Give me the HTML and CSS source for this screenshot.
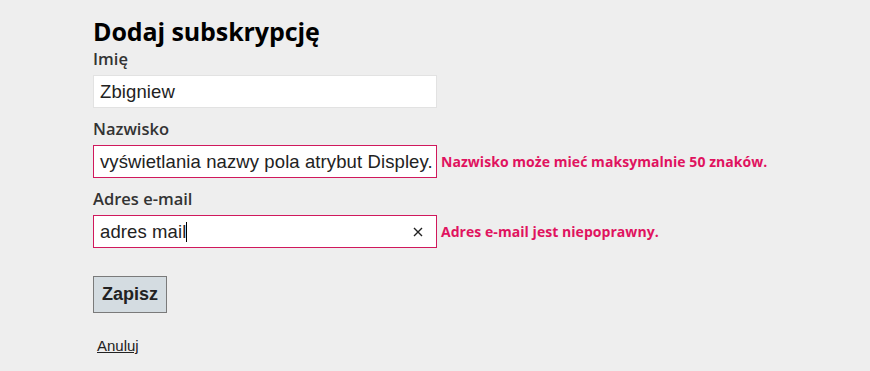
FILE: index.html
```html
<!DOCTYPE html>
<html lang="pl">
<head>
<meta charset="utf-8">
<title>Dodaj subskrypcję</title>
<link rel="stylesheet" href="styles.css">
</head>
<body>
<main class="page">
  <h1 class="title">Dodaj subskrypcję</h1>
  <form class="form">
    <div class="group">
      <label class="label">Imię</label>
      <div class="row">
        <div class="field">Zbigniew</div>
      </div>
    </div>
    <div class="group">
      <label class="label">Nazwisko</label>
      <div class="row">
        <div class="field invalid">vyświetlania nazwy pola atrybut Displey.</div>
        <span class="error">Nazwisko może mieć maksymalnie 50 znaków.</span>
      </div>
    </div>
    <div class="group">
      <label class="label">Adres e-mail</label>
      <div class="row">
        <div class="field invalid with-clear"><span class="value">adres mail</span><span class="caret"></span>
          <svg class="clear" width="10" height="10" viewBox="0 0 10 10"><path d="M1 1 L9 9 M9 1 L1 9" stroke="#222" stroke-width="1.4" fill="none"/></svg>
        </div>
        <span class="error">Adres e-mail jest niepoprawny.</span>
      </div>
    </div>
    <div class="actions">
      <button type="button" class="btn">Zapisz</button>
    </div>
    <div class="links">
      <a href="#" class="link">Anuluj</a>
    </div>
  </form>
</main>
</body>
</html>
```
FILE: styles.css
```css
html, body {
  margin: 0;
  padding: 0;
  background: #eeeeee;
}
.page {
  padding: 16px 0 0 93px;
  font-family: "Open Sans", "Noto Sans", sans-serif;
  color: #000;
}
.title {
  margin: 0;
  font-size: 25px;
  line-height: 30px;
  font-weight: 700;
  letter-spacing: -0.1px;
  color: #000;
}
.form {
  margin: 0;
  padding-top: 3px;
}
.group {
  margin-bottom: 11px;
}
.label {
  display: block;
  font-size: 16.5px;
  line-height: 20px;
  font-weight: 600;
  color: #333;
  margin-bottom: 6px;
}
.row {
  display: flex;
  align-items: center;
}
.field {
  position: relative;
  box-sizing: border-box;
  width: 344px;
  height: 33px;
  padding: 0 6px;
  border: 1px solid #e2e2e2;
  background: #fff;
  font-family: "Liberation Sans", Arial, sans-serif;
  font-size: 18.5px;
  letter-spacing: 0.1px;
  line-height: 31px;
  color: #222;
  white-space: nowrap;
  overflow: hidden;
}
.field.invalid {
  border-color: #d0185c;
}
.value {
  vertical-align: top;
}
.caret {
  display: inline-block;
  width: 1px;
  height: 20px;
  background: #000;
  vertical-align: top;
  margin-top: 6px;
}
.clear {
  position: absolute;
  right: 13px;
  top: 11px;
}
.error {
  margin-left: 4px;
  font-size: 14px;
  font-weight: 700;
  color: #e0135f;
  letter-spacing: 0.05px;
}
.actions {
  padding-top: 17px;
}
.btn {
  box-sizing: border-box;
  width: 74px;
  height: 37px;
  padding: 0;
  border: 1px solid #7a7a7a;
  background: #d4dce1;
  font-family: "Liberation Sans", Arial, sans-serif;
  font-size: 18px;
  font-weight: 700;
  color: #222;
}
.links {
  padding: 24px 0 0 4px;
  font-family: "Liberation Sans", Arial, sans-serif;
  font-size: 15px;
  line-height: 18px;
}
.link {
  color: #222;
  text-decoration: underline;
}
```
